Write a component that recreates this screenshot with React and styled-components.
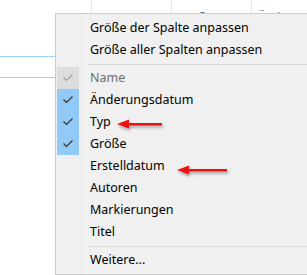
import styled, { createGlobalStyle } from "styled-components";

const Global = createGlobalStyle`
  body {
    margin: 0;
    background: #fff;
    font-family: "Noto Sans", "Segoe UI", sans-serif;
  }
`;

const Screen = styled.div`
  position: relative;
  width: 307px;
  height: 275px;
  overflow: hidden;
  background: #fff;
`;

const Header = styled.div`
  display: grid;
  grid-template-columns: 91px 80px 80px 80px;
  height: 24px;
`;

const HeaderCell = styled.div`
  border-left: ${(p) => (p.first ? "none" : "1px solid #e5e5e5")};
  padding: 10px 0 0 6px;
  font-size: 12px;
  line-height: 16px;
  color: #4c607a;
  white-space: nowrap;
  overflow: hidden;
`;

const Lines = styled.div`
  padding-top: 32px;
  width: 55px;
`;

const BlueLine = styled.div`
  height: 1px;
  background: #99d1ff;
  margin-bottom: 20px;
`;

const Menu = styled.div`
  position: absolute;
  left: 55px;
  top: 13px;
  width: 280px;
  height: 262px;
  box-sizing: border-box;
  border: 1px solid #cccccc;
  padding: 3px 0 0 1px;
  background: linear-gradient(
      to right,
      transparent 30px,
      #fbfbfb 30px,
      #fbfbfb 31px,
      transparent 31px
    ),
    #f0f0f0;
  font-size: 12.5px;
  color: #000;
`;

const Item = styled.div`
  display: flex;
  align-items: center;
  height: 22px;
  color: ${(p) => (p.disabled ? "#6d6d6d" : "#000")};
`;

const Check = styled.div`
  width: 22px;
  height: 22px;
  margin-right: 11px;
  display: flex;
  align-items: center;
  justify-content: center;
  background: ${(p) =>
    p.state === "on" ? "#91c9f7" : p.state === "off" ? "#dddddd" : "transparent"};
`;

const Label = styled.span`
  line-height: 16px;
  white-space: nowrap;
`;

const Separator = styled.div`
  height: 6px;
  margin-left: 30px;
  display: flex;
  align-items: center;
  &::after {
    content: "";
    flex: 1;
    height: 1px;
    background: #d7d7d7;
  }
`;

const Arrow = styled.svg`
  position: absolute;
  filter: drop-shadow(1px 2px 1.5px rgba(0, 0, 0, 0.35));
`;

const Tick = ({ color }) => (
  <svg width="22" height="22" viewBox="0 0 22 22">
    <path d="M6.5 10.5 L9.5 13.5 L15.5 7.5" fill="none" stroke={color} strokeWidth="1.2" />
  </svg>
);

const MenuItem = ({ check, disabled, children }) => (
  <Item disabled={disabled}>
    <Check state={check}>
      {check === "on" && <Tick color="#333" />}
      {check === "off" && <Tick color="#a0a0a0" />}
    </Check>
    <Label>{children}</Label>
  </Item>
);

const RedArrow = ({ left, top, width }) => (
  <Arrow style={{ left, top }} width={width + 4} height="16" viewBox={`0 0 ${width + 4} 16`}>
    <path
      d={`M${width} 6 L13 6 L13 2.5 L1 7 L13 11.5 L13 8.5 L${width} 8.5 Z`}
      fill="#ee1111"
    />
  </Arrow>
);

export default function App() {
  return (
    <>
      <Global />
      <Screen>
        <Header>
          <HeaderCell first />
          <HeaderCell>Typ</HeaderCell>
          <HeaderCell>Größe</HeaderCell>
          <HeaderCell>Änderungsdatum</HeaderCell>
        </Header>
        <Lines>
          <BlueLine />
          <BlueLine />
        </Lines>
        <Menu>
          <MenuItem>Größe der Spalte anpassen</MenuItem>
          <MenuItem>Größe aller Spalten anpassen</MenuItem>
          <Separator />
          <MenuItem check="off" disabled>Name</MenuItem>
          <MenuItem check="on">Änderungsdatum</MenuItem>
          <MenuItem check="on">Typ</MenuItem>
          <MenuItem check="on">Größe</MenuItem>
          <MenuItem>Erstelldatum</MenuItem>
          <MenuItem>Autoren</MenuItem>
          <MenuItem>Markierungen</MenuItem>
          <MenuItem>Titel</MenuItem>
          <Separator />
          <MenuItem>Weitere...</MenuItem>
        </Menu>
        <RedArrow left={116} top={117} width={46} />
        <RedArrow left={176} top={163} width={51} />
      </Screen>
    </>
  );
}
